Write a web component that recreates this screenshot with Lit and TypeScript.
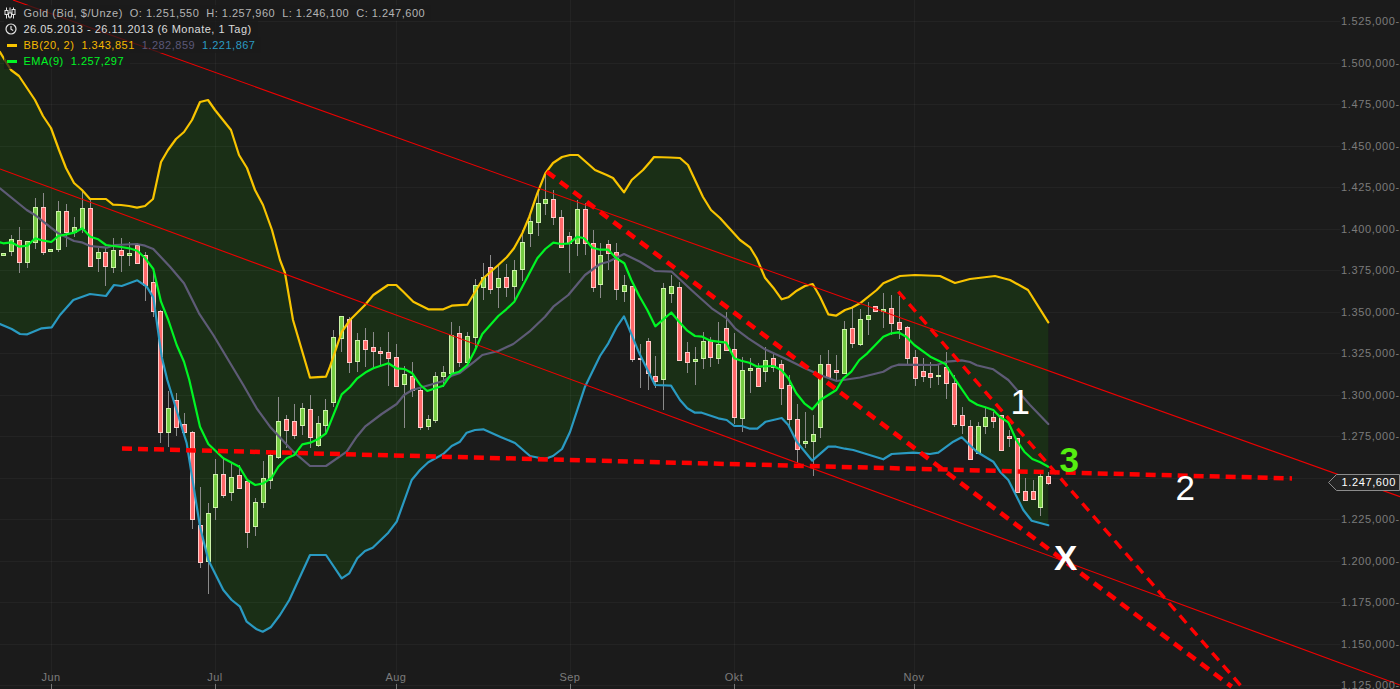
import { LitElement, html, css, svg } from "lit";
import { customElement } from "lit/decorators.js";

const UPPER = "0,52 6,62 11,70 19,76 27,88 35,100 43,116 51,128 59,150 66,168 74,183 82,190 90,199 98,199 106,199 113,204.7 121,205 129,206 137,207.7 145,206 153,199 161,162 168,150 176,139 184,132 192,120 200,102 208,100 215,110 223,120 231,130 239,155 247,168 255,190 263,205 272,230 280,260 285,273 293,320 310,377.7 326,376.7 330,366.7 341.7,332 350,320 365,305 373.3,295 388,285 396.3,285 403.3,291.7 413.3,301.7 428.3,309.3 443.3,309.3 451.7,305.7 467.3,304.7 483.3,278.3 498.3,265 506.7,257.3 514,248.3 522.3,233.3 529.3,216.7 537.3,193.3 545.3,173.3 553,163 562,157 570,155 578,155 586,162 595,170 606.7,175 613,178 624,192.3 631.7,180 643,170 650,162 654,157 670,157.5 680,158 688,165 695,180 703,197 711,210 720,218 740,240 750,247.3 756.7,258.3 765,277.7 773.3,287.7 781.7,299.3 788.3,297.3 796.7,290.7 805,286 812.7,284 820,296.7 828.3,314.3 836,315.7 845,310 851.7,307.7 860,303.3 876.7,290 883.3,283.3 900,276 915,275 940,276 955,283 970,279 995,276 1010,280 1028,290 1048.3,322.3";
const MIDDLE = "0,188.3 26.7,210 35,215 43.3,221.7 58.3,233.3 74,241 81.7,242.3 90,246 106.7,247.7 115,245 136.7,244 145,245.7 153.3,249 170,266.7 184,283.3 199,313.3 213.3,335 228.3,360 243.3,385 256.7,408.3 270,426.7 293.3,451.7 310,466 326,466 346.7,451.7 356.7,436.7 365,426.7 381.7,414 396.7,404 404,395 412.3,390 443.3,381 451.7,375.7 459.3,373.3 474.3,361.7 482.3,355 498.3,351 513.3,344 529.3,331.7 545,316.7 553.3,306.7 568.3,295 585,275 600,264 608.3,261.7 624,254 640,261.7 655,271 671.7,271.7 693.3,291.7 711.7,308.3 726.7,318.3 735,328.3 748.3,338.3 765,349.3 788.3,360 805,368.3 820,375 836.7,381 860,377.5 883.3,371.7 891.7,366.7 898.3,364.7 936.7,365 946.7,361.7 961.7,360.3 970,362 976.7,365.3 993.3,369.3 1008.3,380 1030,405 1048.3,424";
const LOWER = "0,324 11.7,329 20,334 27.3,334.3 41.7,328.3 51.7,327.3 60,315 73.3,300 90,294 106,296 114,285 121.7,286 137.3,280.3 146.7,286.7 153.3,297.3 161.7,356.7 167.3,380 186.7,443.3 200,526.7 208.3,560 223.3,590 231.7,600 240,606.7 246.7,621.7 256.7,629.3 262.7,631.7 270.7,627.3 280,615 289.3,600 310,555 326,555 341.7,578.3 349.3,573.3 357.3,558.3 365,551 372.7,547.7 388.3,532.7 396.7,521.7 411.7,480 420,470 428.3,462.3 443.3,454 451.7,446 460,441.7 466.7,432.7 475,430 483.3,429.3 500,436.7 515,443 530,456 545,459 553,456 562,449 570,432 585,386.7 600,356 608.3,343.3 616.7,327 624,316.3 639.3,353.3 655,385 671,385.7 680,400 687.3,408.3 695,412.7 701.7,412.7 718.3,418.3 726.7,420 734.3,426 741.7,426 750,428.7 757.3,428.7 765.7,421.7 781.7,418 788.3,425 796.7,441.7 812.3,460.7 828.3,446.7 836,446.7 845,448.7 853.3,450 883.3,459.3 891.7,454 913.3,452.7 930,454 938.3,452.7 953.3,441.7 961.7,437.3 976.7,451.7 993.3,461.7 1000,471.7 1008.3,480 1023.3,510 1031.7,520.7 1048.3,525.3";
const EMA = "0,242.3 3.3,243.3 11.3,242.3 19.3,246.7 27.3,245.7 35.3,238.3 43.3,240.7 51.3,242 58.3,236 66.3,234.3 74.3,232.7 82.3,228.3 90.3,236.7 98.3,239.3 106,245 113.3,246 121.3,247 129.3,248.3 137.3,250.7 145.3,258.3 153.3,269 161,301.7 168.3,320 176.7,345 184,361.7 189.3,380 200,426.7 208.3,444 223.3,458.3 239.3,466.7 247.3,480 255.3,485 263.3,483.3 271.7,477.7 278.3,466.7 286.7,458.3 294.3,455 302.3,444.3 310.3,442.7 318.3,439 326,433.3 341.7,394.3 350,387 357.3,378.3 366.7,371.7 373.3,368.3 388.3,363.3 396.3,368.3 404.3,369 412.3,373.3 420.3,385 427.3,391 435.3,388.3 443.3,385.7 451.3,374 459.3,371.7 467.3,365 474.3,351.7 482.3,334 498.3,316 506.3,309.3 514.3,301.7 522.3,286.7 537.3,258.3 545.3,249 553.3,242.7 561.3,244 569.3,243.3 577.3,236.7 584.3,238.3 592.3,247.7 600.3,249.7 608.3,249.7 616.3,258.3 624.3,263.3 631.3,280 639.3,296 647.3,310 655.3,326.3 671.3,312.5 679.3,322 687.3,330.7 695,336 702.3,336.7 710.3,340.7 726.3,342.7 734.3,358.3 741.3,360.7 749.3,362.7 757.3,366.7 773.3,366 781.3,370 788.3,378.3 796.3,393.3 804.3,403.3 812.3,409.3 820.3,400 836.3,390 843.3,378.3 851.3,371.7 859.3,360 867.3,353.3 883.3,336.7 891.3,333.3 898.3,332.3 906.3,336.7 914.3,345 930.3,356.7 945.3,364 953.3,376.7 961.3,388.3 969.3,400 977.3,404.7 985.3,407.3 993.3,410 1000.3,417.3 1008.3,422.3 1016.3,440 1024.3,451.7 1032.3,459 1040.3,462.3 1048.3,466.7";

// [wick top, body top, body bottom, wick bottom, up?]
type Candle = [number, number, number, number, number];
const CANDLES: Candle[] = [
  [253, 253, 254.5, 254.5, 1], [235, 239.3, 250.7, 256, 1], [227, 240.3, 261.7, 272.7, 0], [241, 241.3, 261.7, 267.7, 1],
  [198, 207.3, 241.7, 249, 1], [193, 207.3, 251.7, 255, 0], [249, 249, 250.5, 250.5, 1], [201, 211.3, 248.7, 251.7, 1],
  [204, 211.3, 231.7, 246.7, 0], [217, 227.3, 231.7, 236.7, 1], [190, 208.3, 227.7, 233, 1], [200, 208.3, 265.7, 266.7, 0],
  [248, 252.3, 257.7, 271.7, 1], [246.7, 252.3, 265.7, 286, 0], [238, 250.3, 266.7, 272.7, 1], [238, 250.3, 254.7, 271.7, 0],
  [241.7, 253, 254.5, 266, 1], [243.3, 245.3, 262.7, 262.7, 0], [251.7, 255.3, 284.7, 300.7, 0], [270, 282.3, 311.3, 317.3, 0],
  [310, 311.3, 431.7, 442.7, 0], [391, 408.3, 431.7, 446.7, 1], [393, 400.3, 426.7, 436, 0], [413, 424.3, 432.3, 437, 0],
  [431, 432.3, 519.3, 529, 0], [487.3, 525.3, 561.7, 567.7, 0], [503.3, 513.3, 560.7, 594, 1], [459.3, 474.3, 506.7, 520, 1],
  [458.3, 474.3, 494.7, 498.3, 0], [463.3, 477.3, 491.7, 500.7, 1], [465, 475.3, 487.7, 488, 0], [480, 480.7, 531.7, 547.7, 0],
  [498, 502.3, 525.7, 536, 1], [461, 478.3, 501.7, 508, 1], [452, 455.3, 479.7, 489, 1], [397.3, 421.3, 457.3, 459, 1],
  [415, 419.3, 429.7, 448, 0], [404, 421.3, 434.7, 439.3, 0], [403.3, 408.3, 424.7, 435, 1], [395, 409.3, 436.7, 448.3, 0],
  [415.7, 423.3, 445.3, 446.7, 1], [399, 410.3, 424.7, 435, 1], [330, 337.3, 401.7, 406.7, 1], [316, 316.3, 338.3, 351.7, 1],
  [316.7, 319.3, 361.7, 373.3, 0], [333.3, 340.3, 360.7, 371.7, 1], [328.3, 340.3, 348.7, 366.7, 0], [332.3, 347.3, 350.7, 368.3, 0],
  [346.7, 351.2, 352.7, 365, 0], [331.7, 351.7, 357.7, 386, 0], [344, 357.3, 385.7, 385.7, 0], [365.7, 374.3, 383.7, 428.3, 1],
  [361.7, 375.7, 390, 396.7, 0], [388, 390, 426.7, 430, 0], [415, 419.3, 425.7, 430, 1], [371.7, 376.3, 419.7, 423.3, 1],
  [366, 372.3, 375.7, 386.7, 1], [322.3, 335.3, 372.7, 376.7, 1], [326, 333.3, 361.7, 366.7, 0], [331.7, 336.3, 361.7, 363.3, 1],
  [279, 285.3, 336.7, 346.7, 1], [263.3, 277.3, 286.7, 300, 1], [255, 267.3, 288.7, 294, 0], [265, 278.3, 287.3, 307.7, 1],
  [264, 277.3, 286.7, 296.7, 0], [260, 270.3, 285.7, 300, 1], [230, 242.3, 268.7, 281, 1], [213.3, 221.3, 232.7, 246.7, 1],
  [188.3, 203.3, 221.7, 235.7, 1], [175, 199.3, 203.3, 215, 1], [190, 199.3, 216.7, 225, 0], [210, 217.3, 246.7, 247, 0],
  [231.7, 236.3, 242.7, 272.7, 0], [200, 209.3, 242.7, 256, 1], [203.3, 209.3, 243.3, 255, 0], [230, 243.3, 286.7, 291.7, 0],
  [243.3, 255.3, 284.3, 298.3, 1], [240, 244.3, 253, 270, 0], [243, 251.7, 289.3, 300, 0], [275, 285.3, 290.7, 301.7, 1],
  [286, 286.3, 359.3, 361.7, 0], [344, 357.8, 359.3, 387.7, 0], [338.3, 340.7, 373.3, 390, 0], [356, 376, 380.7, 388.3, 0],
  [283.3, 288.3, 378.7, 410, 1], [275, 286.3, 292.7, 303.3, 1], [281.7, 287.3, 360.3, 360.3, 0], [341.7, 352.3, 361.7, 373.3, 0],
  [346.7, 359.2, 360.7, 385, 1], [332.3, 341.3, 357.7, 369, 1], [337, 341.3, 357.3, 367, 0], [322.3, 344.3, 357.7, 364, 1],
  [311.7, 328.3, 349.7, 351, 0], [333.3, 349.3, 417.3, 424, 0], [356.7, 370.3, 417.7, 431.7, 1], [358.3, 368.2, 369.7, 392.7, 1],
  [363.3, 368.3, 385.7, 386, 0], [347.3, 360.3, 371.3, 381.7, 1], [353.3, 358.3, 366.7, 371.7, 0], [360, 364.3, 388.3, 405, 0],
  [375, 385.3, 418.7, 426.7, 0], [404, 419.3, 449.3, 462.7, 0], [412.3, 441, 442.5, 448.3, 1], [415, 434.3, 440.7, 476, 1],
  [355, 364.3, 426.7, 438.3, 1], [350, 364.3, 376.7, 378.3, 0], [355, 370, 371.5, 380, 0], [321, 329.3, 372.7, 373.3, 1],
  [308.3, 328.3, 342.7, 347.7, 0], [309, 319.3, 343.7, 346, 1], [302.3, 315.3, 318.7, 335, 1], [306, 306.3, 310.7, 311, 0],
  [293.3, 308.5, 310.5, 328, 1], [295, 308.3, 322.7, 335, 0], [296, 322.3, 328.7, 339, 0], [326, 327.3, 357.7, 364, 0],
  [350, 357.3, 378.3, 386, 0], [358.3, 371.3, 375.7, 381.7, 0], [361.7, 373.3, 377.3, 387.7, 0], [365, 374.5, 376, 385, 1],
  [351.7, 367.3, 382.7, 399, 0], [375, 383.3, 423.7, 426.7, 0], [406.7, 415.3, 424.7, 434, 0], [420, 426, 459, 460, 0],
  [421.7, 426, 452.7, 453.3, 1], [406.7, 417, 425.7, 434, 1], [411.7, 417, 420.7, 427.7, 0], [415.3, 415.3, 449.7, 449.7, 0],
  [430, 436.2, 437.7, 446.7, 0], [438.3, 438.3, 492.3, 492.3, 0], [478.3, 491.3, 500, 500.7, 0], [480, 491, 499, 499, 0],
  [470, 476.3, 506.7, 516, 1], [471.7, 476.3, 482.7, 485, 0],
];

const PRICES = ["1.525", "1.500", "1.475", "1.450", "1.425", "1.400", "1.375", "1.350", "1.325", "1.300", "1.275", "", "1.225", "1.200", "1.175", "1.150", "1.125"];
const MONTHS: [string, number][] = [["Jun", 51], ["Jul", 215], ["Aug", 396], ["Sep", 570], ["Okt", 734], ["Nov", 914]];
const gridY = (i: number) => Math.round(21 + i * 41.53) + 0.5;
const px = (v: number) => Math.round(v) + 0.5;

@customElement("app-root")
export class AppRoot extends LitElement {
  static styles = css`
    :host {
      display: block;
      position: relative;
      width: 1400px;
      height: 689px;
      overflow: hidden;
      background: #1b1b1b;
      font-family: "Liberation Sans", Arial, sans-serif;
    }
    .chart { display: block; width: 1400px; height: 689px; }
    .band { fill: #1a2f16; stroke: none; }
    .grid { stroke: rgba(255, 255, 255, 0.04); stroke-width: 1; }
    .wick { stroke: #8a8a8a; stroke-width: 1; }
    .up { fill: #77cc44; stroke: #ccf2a8; stroke-width: 1; }
    .down { fill: #ff6a6a; stroke: #ffcaca; stroke-width: 1; }
    .ln { fill: none; stroke-width: 2.2; stroke-linejoin: round; stroke-linecap: round; }
    .upper { stroke: #f8c400; }
    .middle { stroke: #5e5b76; }
    .lower { stroke: #2a9ac2; }
    .ema { stroke: #00f524; }
    .thin { stroke: #ee0000; stroke-width: 1.1; }
    .dash-h { stroke: #ff0000; stroke-width: 4.5; stroke-dasharray: 10 6; fill: none; }
    .dash-a { stroke: #ff0000; stroke-width: 4.6; stroke-dasharray: 10 6.7; fill: none; }
    .dash-b { stroke: #ff0000; stroke-width: 3.4; stroke-dasharray: 10 6.5; fill: none; }
    .axis { fill: #7b7b7b; font-size: 11px; letter-spacing: 0.62px; }
    .month { text-anchor: middle; letter-spacing: 0.4px; }
    .tick { stroke: #777; stroke-width: 1; }
    .tag { fill: #232323; stroke: #8c8c8c; stroke-width: 1; }
    .tag-text { fill: #fff; font-size: 11px; letter-spacing: 0.62px; }
    .note { font-size: 35px; fill: #fff; }
    .bold { font-weight: 700; }
    .green { fill: #55ee10; }

    .legend {
      position: absolute;
      left: 4px;
      top: 5px;
      display: flex;
      flex-direction: column;
      align-items: flex-start;
      font-size: 11px;
      letter-spacing: 0.49px;
      line-height: 16px;
      color: #b4b4b4;
    }
    .row {
      display: flex;
      align-items: center;
      height: 16px;
      padding-right: 6px;
      background: rgba(27, 27, 27, 0.72);
      white-space: nowrap;
    }
    .ico { width: 19.5px; flex: none; display: flex; align-items: center; }
    .ico svg { display: block; }
    .it { margin-right: 7px; }
    .it:last-child { margin-right: 0; }
    .white { color: #dcdcdc; }
    .c-bb { color: #f5b800; }
    .c-mid { color: #5a5878; }
    .c-low { color: #2a9ac2; }
    .c-ema { color: #00f524; }
    .dash { display: block; width: 10px; height: 3px; margin-left: 3px; }
    .dash.bb { background: #f8c400; }
    .dash.em { background: #00f524; }
  `;

  private band() {
    const lower = LOWER.split(" ").reverse().join(" ");
    return `${UPPER} ${lower}`;
  }

  private candles() {
    return CANDLES.map(([wt, bt, bb, wb, up], i) => {
      const x = Math.round(3.3 + i * 7.857);
      const top = Math.round(bt);
      const h = Math.max(1, Math.round(bb) - top);
      return svg`<line class="wick" x1=${x + 0.5} x2=${x + 0.5} y1=${Math.round(wt)} y2=${Math.round(wb)}></line>
        <rect class=${up ? "up" : "down"} x=${x - 1.5} y=${top + 0.5} width="4" height=${h}></rect>`;
    });
  }

  render() {
    return html`
      <svg class="chart" viewBox="0 0 1400 689" xmlns="http://www.w3.org/2000/svg">
        <polygon class="band" points=${this.band()}></polygon>
        ${PRICES.map((_, i) => svg`<line class="grid" x1="0" x2="1340" y1=${gridY(i)} y2=${gridY(i)}></line>`)}
        ${MONTHS.map(([, x]) => svg`<line class="grid" x1=${px(x)} x2=${px(x)} y1="0" y2="684"></line>`)}
        ${this.candles()}
        <polyline class="ln upper" points=${UPPER}></polyline>
        <polyline class="ln middle" points=${MIDDLE}></polyline>
        <polyline class="ln lower" points=${LOWER}></polyline>
        <polyline class="ln ema" points=${EMA}></polyline>
        <line class="thin" x1="13" y1="0" x2="1400" y2="496.7"></line>
        <line class="thin" x1="0" y1="169" x2="1400" y2="685"></line>
        <line class="dash-h" x1="122" y1="448.5" x2="1292" y2="478.4"></line>
        <line class="dash-a" x1="546.7" y1="171.7" x2="1231.7" y2="686.7"></line>
        <line class="dash-b" x1="898.3" y1="291.7" x2="1241.7" y2="686.7"></line>
        ${PRICES.map((p, i) => (p ? svg`<text class="axis" x="1341" y=${gridY(i) + 3.5}>${p},000-</text>` : null))}
        ${MONTHS.map(([m, x]) => svg`<text class="axis month" x=${x} y="681">${m}</text>
          <line class="tick" x1=${px(x)} x2=${px(x)} y1="684" y2="689"></line>`)}
        <polygon class="tag" points="1328.5,482.5 1336.5,474.5 1399.5,474.5 1399.5,490.5 1336.5,490.5"></polygon>
        <text class="tag-text" x="1341.5" y="486">1.247,600</text>
        <text class="note" x="1010.5" y="414">1</text>
        <text class="note" x="1175.5" y="500">2</text>
        <text class="note bold green" x="1059.5" y="472">3</text>
        <text class="note bold" x="1054" y="569.5">X</text>
      </svg>
      <div class="legend">
        <div class="row">
          <span class="ico">
            <svg width="12" height="12" viewBox="0 0 12 12" fill="none" stroke="#e4e4e4" stroke-width="1">
              <path d="M2.5 0.5v11M6 0.5v11M9.5 0.5v11"></path>
              <rect x="1" y="3.5" width="3" height="4" fill="#1b1b1b"></rect>
              <rect x="4.5" y="6" width="3" height="4" fill="#1b1b1b"></rect>
              <rect x="8" y="2.5" width="3" height="5" fill="#1b1b1b"></rect>
            </svg>
          </span>
          <span class="it">Gold (Bid, $/Unze)</span>
          <span class="it">O: 1.251,550</span>
          <span class="it">H: 1.257,960</span>
          <span class="it">L: 1.246,100</span>
          <span class="it">C: 1.247,600</span>
        </div>
        <div class="row">
          <span class="ico">
            <svg width="13" height="12" viewBox="0 0 13 12" fill="none" stroke="#e4e4e4" stroke-width="1.2">
              <circle cx="7" cy="6" r="5"></circle>
              <path d="M7 3v3.2l2.2 1.3"></path>
            </svg>
          </span>
          <span class="white">26.05.2013 - 26.11.2013 (6 Monate, 1 Tag)</span>
        </div>
        <div class="row">
          <span class="ico"><span class="dash bb"></span></span>
          <span class="it c-bb">BB(20, 2)</span>
          <span class="it c-bb">1.343,851</span>
          <span class="it c-mid">1.282,859</span>
          <span class="it c-low">1.221,867</span>
        </div>
        <div class="row">
          <span class="ico"><span class="dash em"></span></span>
          <span class="it c-ema">EMA(9)</span>
          <span class="it c-ema">1.257,297</span>
        </div>
      </div>
    `;
  }
}
